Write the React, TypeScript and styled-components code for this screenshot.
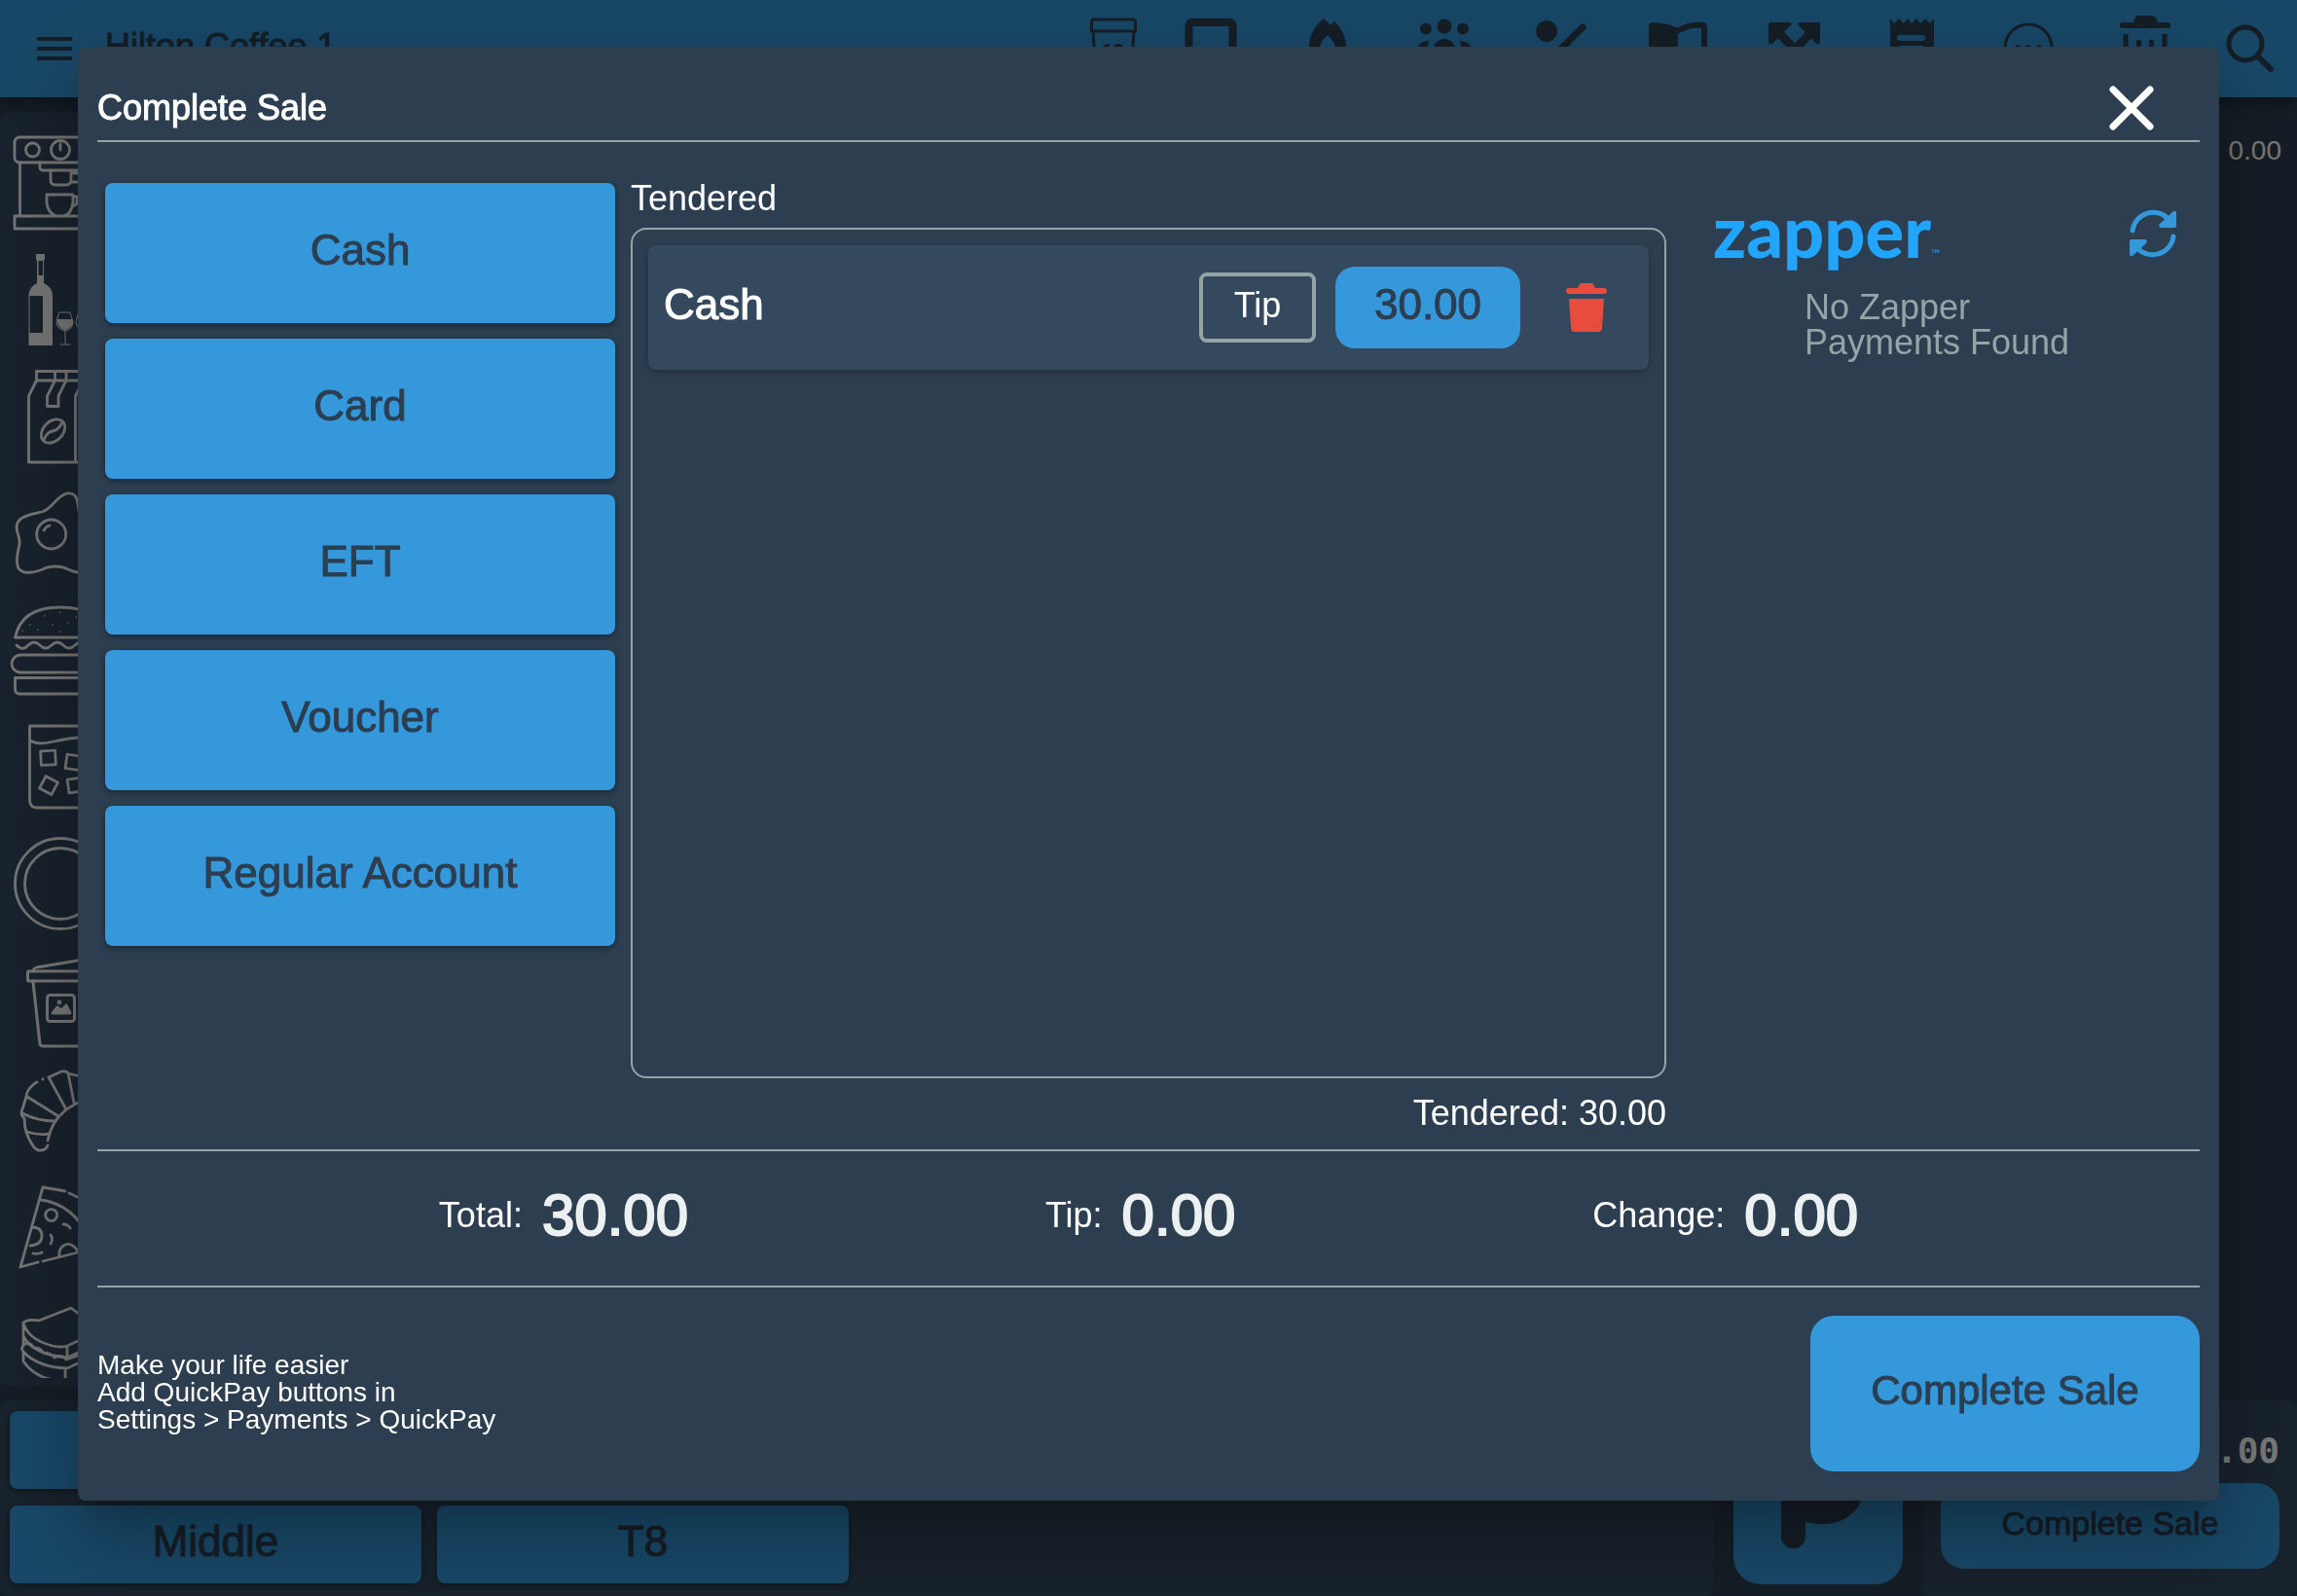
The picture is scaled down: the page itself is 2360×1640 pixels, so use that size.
import React from "react";
import styled, { createGlobalStyle } from "styled-components";

const color = {
  blue: "#3498db",
  navy: "#2c3e50",
  slate: "#34495e",
  grey: "#95a5a6",
  light: "#ecf0f1",
  red: "#e74c3c",
  zapper: "#22a5ff",
};

const GlobalStyle = createGlobalStyle`
  * { box-sizing: border-box; }
  body {
    margin: 0;
    background: ${color.navy};
    font-family: "Liberation Sans", Arial, Helvetica, sans-serif;
    font-size: 36px;
    line-height: 36px;
    color: #fff;
  }
  button { font: inherit; color: inherit; border: 0; padding: 0; background: none; cursor: pointer; }
  h1, h2, h3, p, ul { margin: 0; padding: 0; font: inherit; list-style: none; }
  svg { display: block; overflow: visible; flex: none; }
`;

/* ---------- till screen behind the dialog ---------- */

const Till = styled.div`
  height: 100vh;
  display: flex;
  flex-direction: column;
  overflow: hidden;
`;

const TopBar = styled.header`
  position: relative;
  flex: none;
  height: 100px;
  display: flex;
  align-items: center;
  padding: 0 16px 0 38px;
  background: ${color.blue};
  color: ${color.navy};
  box-shadow: 0 4px 16px rgba(0, 0, 0, 0.45);
`;

const ShopName = styled.h1`
  flex: 1;
  padding: 0 0 4px 34px;
  -webkit-text-stroke: 1px;
`;

const IconButton = styled.button`
  display: block;
`;

const Tools = styled.nav`
  display: flex;
  gap: 56px;
  margin: 0 44px 0 36px;
`;

const Main = styled.main`
  flex: 1;
  min-height: 0;
  display: flex;
  justify-content: space-between;
  padding: 15px 0;
`;

const Categories = styled.ul`
  width: 124px;
  padding: 25px 14px 0;
  background: ${color.slate};
  border-radius: 8px;
  border-bottom: 8px solid ${color.slate};
  overflow: hidden;
  display: flex;
  flex-direction: column;
  gap: 24px;
`;

const OrderPrice = styled.p`
  padding: 22px 16px 0 0;
  font-size: 28px;
`;

const BottomBar = styled.footer`
  flex: none;
  display: grid;
  grid-template-columns: 1fr 216px 384px;
`;

const Panel = styled.div`
  padding: 11px 10px 13px;
  background: ${color.slate};
  border-radius: 8px;
`;

const Tables = styled(Panel)`
  display: grid;
  grid-template-columns: repeat(4, 1fr);
  gap: 16px;
`;

const TileButton = styled.button<{ $tall?: boolean; $wide?: boolean }>`
  height: ${(p) => (p.$tall ? 144 : 80)}px;
  grid-column: ${(p) => (p.$wide ? "1 / -1" : "auto")};
  padding-bottom: 6px;
  border-radius: 8px;
  background: ${color.blue};
  color: ${color.navy};
  font-size: 44px;
  -webkit-text-stroke: 1px;
  box-shadow: 0 2px 6px rgba(0, 0, 0, 0.4);
`;

const ParkCell = styled.div`
  display: flex;
  justify-content: center;
  align-items: flex-end;
  padding-bottom: 12px;
`;

const ParkButton = styled.button`
  border-radius: 28px;
  background: ${color.blue};
  color: ${color.navy};
`;

const Checkout = styled(Panel)`
  display: flex;
  flex-direction: column;
  padding: 34px 18px 28px;
  gap: 15px;
`;

const CheckoutTotal = styled.p`
  text-align: right;
  font-family: "DejaVu Sans Mono", "Liberation Mono", monospace;
  font-weight: bold;
`;

const SaleButton = styled.button<{ $large?: boolean }>`
  width: ${(p) => (p.$large ? "400px" : "100%")};
  height: ${(p) => (p.$large ? 160 : 88)}px;
  padding-bottom: 6px;
  border-radius: 24px;
  background: ${color.blue};
  color: ${color.navy};
  font-size: ${(p) => (p.$large ? 42 : 34)}px;
  -webkit-text-stroke: 1px;
`;

/* ---------- dialog ---------- */

const Backdrop = styled.div`
  position: fixed;
  inset: 0;
  padding: 48px 80px 98px;
  display: flex;
  background: rgba(0, 0, 0, 0.53);
`;

const Dialog = styled.section`
  flex: 1;
  display: flex;
  flex-direction: column;
  padding: 0 20px 30px;
  border-radius: 8px;
  background: ${color.navy};
  box-shadow: 0 22px 30px -14px rgba(0, 0, 0, 0.2), 0 48px 76px 6px rgba(0, 0, 0, 0.14),
    0 18px 92px 16px rgba(0, 0, 0, 0.12);
`;

const DialogHeader = styled.header`
  flex: none;
  height: 98px;
  display: flex;
  align-items: center;
  justify-content: space-between;
  padding: 30px 46px 0 0;
  border-bottom: 2px solid ${color.grey};
`;

const DialogTitle = styled.h2`
  -webkit-text-stroke: 1px;
`;

const Columns = styled.div`
  flex: 1;
  min-height: 0;
  display: grid;
  grid-template-columns: 1fr 2fr 1fr;
`;

const PayMethods = styled.div`
  display: flex;
  flex-direction: column;
  gap: 16px;
  padding: 42px 8px 0;
`;

const TenderedColumn = styled.div`
  display: flex;
  flex-direction: column;
  padding: 40px 8px 19px;
`;

const TenderedList = styled.ul`
  flex: 1;
  margin: 12px 0 18px;
  padding: 16px;
  border: 2px solid ${color.grey};
  border-radius: 16px;
`;

const TenderedTotal = styled.p`
  text-align: right;
`;

const Tender = styled.li`
  height: 128px;
  display: flex;
  align-items: center;
  padding: 0 43px 0 16px;
  border-radius: 8px;
  background: ${color.slate};
  box-shadow: 0 2px 6px rgba(0, 0, 0, 0.25);
`;

const TenderName = styled.span`
  flex: 1;
  padding-bottom: 6px;
  font-size: 44px;
  -webkit-text-stroke: 1px;
`;

const TipButton = styled.button`
  width: 120px;
  height: 72px;
  padding-bottom: 4px;
  border: 4px solid ${color.grey};
  border-radius: 8px;
`;

const AmountButton = styled.button`
  width: 190px;
  height: 84px;
  margin: 0 47px 0 20px;
  padding-bottom: 6px;
  border-radius: 20px;
  background: ${color.blue};
  color: ${color.navy};
  font-size: 44px;
  -webkit-text-stroke: 1px;
`;

const ZapperColumn = styled.div`
  display: flex;
  flex-direction: column;
  align-items: center;
  padding-top: 70px;
`;

const ZapperHead = styled.div`
  align-self: stretch;
  height: 82px;
  display: flex;
  justify-content: space-between;
  align-items: flex-start;
  padding: 0 24px 0 40px;
`;

const ZapperLogo = styled.h3`
  display: flex;
  align-items: baseline;
  font-family: Lato, "Open Sans", sans-serif;
  font-weight: 900;
  font-size: 74px;
  line-height: 42px;
  color: ${color.zapper};
`;

const TradeMark = styled.span`
  font-size: 12px;
  font-weight: 400;
`;

const ZapperNote = styled.p`
  color: ${color.grey};
`;

const Totals = styled.div`
  flex: none;
  height: 142px;
  display: flex;
  justify-content: space-evenly;
  align-items: center;
  gap: 16px;
  padding-bottom: 6px;
  border: solid ${color.grey};
  border-width: 2px 0;
`;

const Total = styled.p`
  display: flex;
  align-items: center;
  gap: 20px;
`;

const TotalValue = styled.strong`
  font-weight: 400;
  font-size: 60px;
  line-height: 60px;
  color: ${color.light};
  -webkit-text-stroke: 2px;
`;

const DialogFooter = styled.footer`
  flex: none;
  display: flex;
  justify-content: space-between;
  align-items: center;
  padding-top: 29px;
`;

const Hint = styled.p`
  padding-bottom: 2px;
  font-size: 28px;
  line-height: 28px;
`;

/* ---------- icons ---------- */

const Tool = ({ children }: { children: React.ReactNode }) => (
  <svg width="64" height="72" viewBox="0 0 64 72" fill="currentColor">
    {children}
  </svg>
);

const line = (w: number) => ({
  fill: "none",
  stroke: "currentColor",
  strokeWidth: w,
  strokeLinecap: "round" as const,
  strokeLinejoin: "round" as const,
});

const tools: { name: string; art: React.ReactNode }[] = [
  { name: "Tablet", art: <rect x="9.500" y="9" width="45" height="54" rx="3" {...line(8)} /> },
  {
    name: "Popular",
    art: (
      <path
        fillRule="evenodd"
        d="M28 5C20 11 13 22 13 34c0 16 8 24 19 24s19-8 19-24c0-11-6-21-12-26q-2 1-4 4-3-4-7-7zM32 22c5 4 8 9 8 15 0 7-3 11-8 11s-8-4-8-11c0-6 3-11 8-15z"
      />
    ),
  },
  {
    name: "Customers",
    art: (
      <>
        <circle cx="32" cy="13" r="7.500" />
        <circle cx="13" cy="15.500" r="6" />
        <circle cx="51" cy="15.500" r="6" />
        <path d="M32 26c7 0 11 5 11 11v13H21V37c0-6 4-11 11-11zM16 28c-7 0-12 4-12 9v9h11V36q0-4 1-8zM48 28c7 0 12 4 12 9v9H49V36q0-4-1-8z" />
      </>
    ),
  },
  {
    name: "Discount",
    art: (
      <>
        <circle cx="17" cy="18" r="11" />
        <circle cx="47" cy="50" r="11" />
        <path d="M54 14L10 58" {...line(7)} />
      </>
    ),
  },
  {
    name: "Menu book",
    art: (
      <>
        <path d="M2 13q0-4 4-4 14 0 26 6v44Q20 53 2 53z" />
        <path d="M32 17.500Q43 11 56 11.500q3 0 3 3V51q-14 0-27 7" {...line(6)} />
      </>
    ),
  },
  {
    name: "Transfer",
    art: (
      <>
        <path d="M7 9h20q3 1 1 3L9 31q-4 1-4-3V11q0-2 2-2zM57 9H38q-4 1-2 3l18 19q4 1 4-3V11q0-2-1-2z" />
        <path d="M16 20l16 17v22M48 20L32 37" {...line(9)} />
      </>
    ),
  },
  {
    name: "Receipt",
    art: (
      <path
        fillRule="evenodd"
        d="M10 5l4 5 5-5 5 5 4-5 4 5 5-5 4 5 5-5 5 5 4-5v54H10zM20 22a2 2 0 000 6h23a2 2 0 000-6zM20 33v5h24v-5z"
      />
    ),
  },
  {
    name: "More",
    art: (
      <>
        <circle cx="32" cy="35" r="24" {...line(3)} />
        <circle cx="21" cy="35" r="3" />
        <circle cx="32" cy="35" r="3" />
        <circle cx="43" cy="35" r="3" />
      </>
    ),
  },
  {
    name: "Clear",
    art: (
      <>
        <path d="M24 2h16q4 1 5 8H20q1-7 4-8z" />
        <rect x="6" y="9" width="52" height="6" rx="2" />
        <path d="M12 21v39h40V21" {...line(5)} strokeLinecap="butt" />
        <path d="M25.500 29v21M38.500 29v21" {...line(5)} />
      </>
    ),
  },
];

const Category = ({ children }: { children: React.ReactNode }) => (
  <li>
    <svg width="96" height="96" viewBox="0 0 96 96" fill="none" stroke="#f7f7f7" strokeWidth="2.800" strokeLinejoin="round" strokeLinecap="round">
      {children}
    </svg>
  </li>
);

const categories: React.ReactNode[] = [
  // espresso machine
  <>
    <rect x="1" y="1" width="94" height="26" rx="5" />
    <circle cx="19.500" cy="14" r="7" />
    <circle cx="48" cy="14" r="9.500" />
    <path d="M48 8v6M6.500 27v54M89.500 27v54M27 27v5q0 3 3 3h40M38 35v10q0 5 5 5h11q5 0 5-5V35M60 38h20M60 47h20" />
    <path d="M34 60h27v8q-2 13-10 14h-7q-9-3-10-14zM61 62h4v6q0 3-5 4M1 82h94v13H1z" />
  </>,
  // wine bottle and glasses
  <>
    <path
      d="M23 1h9v6h-1v24q9 4 9 13v51H15.500V44q0-9 8.500-13V7h-1zM25.500 8v15h4.500V8zM16.500 44v38H30V44z"
      fill="#f7f7f7"
      fillRule="evenodd"
      stroke="none"
    />
    <path d="M47 61h11l3 10q0 7-8 9-9-2-9-9zM53 80v13M48 94h10M67 61h11l3 10q0 7-8 9-9-2-9-9zM73 80v13M68 94h10" strokeWidth="1" />
    <path d="M45 68h16q1 9-8 11-9-2-8-11z" fill="#f7f7f7" stroke="none" />
  </>,
  // bag of coffee
  <>
    <path d="M23.500 1.500H72v9.500H23.500zM23.500 11l-8 16v68H80V27l-8-16M42.500 1.500V11l-8 16v10.500H46V27l8-16V1.500M63.500 95V27l8-16" />
    <ellipse cx="40.500" cy="63" rx="14" ry="10" transform="rotate(-45 40.500 63)" />
    <path d="M31 72q3-8 9-9t10-9" />
  </>,
  // fried egg
  <>
    <circle cx="38.700" cy="49" r="15" />
    <path d="M31 45q2-4 6-5" />
    <path d="M29 26C16 29 3 31 3 42c0 6 4 10 3 17S1 76 5 84c5 7 17 4 25 1 7-4 18-4 26 0 10 5 25 6 30-4 5-9-4-16-5-26-1-9 2-16-6-22-8-5-8-6-9-15C65 9 61 6 55 7c-11 2-15 16-26 19z" />
  </>,
  // burger
  <>
    <path d="M1.500 35Q8 4 48 4t46.500 31z" />
    <path d="M3 43c5 5 8 4 12 0s8-4 12 0 8 4 12 0 8-4 12 0 8 4 12 0 8-4 12 0 8 4 12 0" />
    <rect x="-2" y="53" width="100" height="18" rx="9" />
    <path d="M1.500 76.500h93V88q0 5-5 5h-83q-5 0-5-5z" />
    <path d="M9 28h.1M17 22h.1M25 27h.1M32 13h.1M40 22h.1M48 9h.1M48 29h.1M56 20h.1M64 14h.1" strokeWidth="1.500" />
  </>,
  // iced drink
  <>
    <path d="M16.500 6h63v76q0 8-8 8h-47q-8 0-8-8zM17 21q8 5 24 1t38-5" />
    <rect x="28" y="31.500" width="15" height="14.500" transform="rotate(-3 35.500 39)" />
    <rect x="54" y="36" width="15" height="14.500" transform="rotate(8 61 43)" />
    <rect x="29" y="60" width="14" height="14" transform="rotate(28 36 67)" />
    <rect x="56" y="60" width="14" height="14" transform="rotate(-8 63 67)" />
  </>,
  // plate
  <>
    <circle cx="48" cy="48" r="46.500" />
    <circle cx="48" cy="48" r="36.500" />
  </>,
  // takeaway cup
  <>
    <path d="M20 18q0-3 4-4l42-7h10l2 11" />
    <rect x="14.500" y="18" width="68" height="10" rx="1" strokeWidth="3" />
    <path d="M20 29l7 64q1 2 3 2h38q2 0 2-2l7-64" strokeWidth="3" />
    <rect x="34.500" y="42.500" width="28" height="27" rx="3" strokeWidth="3" />
    <path d="M40 61l5-6 4 3 5-5 4 8z" fill="#f7f7f7" />
    <circle cx="47" cy="50" r="1" />
  </>,
  // croissant
  <>
    <path d="M36 7l13-6q5-1 7 2l24 6M30 9h.1M24 12l-2 1Q13 20 13 27L8 43q0 4 3 6 0 15 8 27 4 7 9 6 5 0 7-5M35 72l2-7q3-10 9-17l8-8 12-7" />
    <path d="M36 7l18 33M56 3l6 30M14 27l32 20M9 44q15 8 34 8M14 63q12 4 23 2" />
  </>,
  // pizza slice
  <>
    <path d="M30 0l23 4M57 6q20 8 30 24M28 13q38 5 54 50M30 0L7 82l18-5M30 76l52-13" />
    <circle cx="38.700" cy="28.600" r="6" />
    <path d="M19 41q10 0 10 9t-12 10M47 71q-1-9 6-12t14 8M51 38q5 0 7 4M38 49q3 4 0 9M20 68q5 1 9-1" />
  </>,
  // sandwich
  <>
    <path d="M10 19q5-4 16-2l33-13 34 26-27 8M10 19q4 17 30 24 9 2 15 0l11-5M10 19v14q10 19 45 22V44M10 33v10q-3 2 0 6v10q15 21 43 19V66M12 41q5-2 9 4 7 0 9 5 8 0 12 5 8-4 12 2l12-4M10 49q15 16 45 17l11-5M55 55l11-5" />
  </>,
];

const payMethods = ["Cash", "Card", "EFT", "Voucher", "Regular Account"];

const totals = [
  { label: "Total:", value: "30.00" },
  { label: "Tip:", value: "0.00" },
  { label: "Change:", value: "0.00" },
];

export default function App() {
  return (
    <>
      <GlobalStyle />
      <Till>
        <TopBar>
          <IconButton aria-label="Menu">
            <svg width="36" height="24" viewBox="0 0 36 24" fill="currentColor">
              <path d="M0 0h36v4H0zM0 10h36v4H0zM0 20h36v4H0z" />
            </svg>
          </IconButton>
          <ShopName>Hilton Coffee 1</ShopName>
          <IconButton aria-label="Takeaway">
            <Tool>
              <path d="M9.500 18V9q0-3 3-3h39q3 0 3 3v9zM11 18l3 42h36l3-42" {...line(3)} />
              <path d="M20 36q1-5 8-5v12q-6 0-8-7zM31 35q2-4 6-4t7 5q0 7-7 7t-6-8z" />
            </Tool>
          </IconButton>
          <Tools>
            {tools.map((t) => (
              <IconButton key={t.name} aria-label={t.name}>
                <Tool>{t.art}</Tool>
              </IconButton>
            ))}
          </Tools>
          <IconButton aria-label="Search">
            <Tool>
              <circle cx="27" cy="31" r="17" {...line(5)} />
              <path d="M40 44l13 13" {...line(6)} />
            </Tool>
          </IconButton>
        </TopBar>
        <Main>
          <Categories>
            {categories.map((art, i) => (
              <Category key={i}>{art}</Category>
            ))}
          </Categories>
          <OrderPrice>0.00</OrderPrice>
        </Main>
        <BottomBar>
          <Tables>
            <TileButton $wide aria-label="Tables" />
            <TileButton>Middle</TileButton>
            <TileButton>T8</TileButton>
          </Tables>
          <ParkCell>
            <ParkButton aria-label="Park sale">
              <svg width="174" height="174" viewBox="0 0 174 174">
                <rect x="49" y="36" width="25" height="101" rx="12" fill="currentColor" />
                <rect x="61" y="46" width="60" height="53" rx="26" fill="none" stroke="currentColor" strokeWidth="26" />
              </svg>
            </ParkButton>
          </ParkCell>
          <Checkout>
            <CheckoutTotal>30.00</CheckoutTotal>
            <SaleButton>Complete Sale</SaleButton>
          </Checkout>
        </BottomBar>
      </Till>

      <Backdrop>
        <Dialog role="dialog" aria-modal="true" aria-labelledby="dialog-title">
          <DialogHeader>
            <DialogTitle id="dialog-title">Complete Sale</DialogTitle>
            <IconButton aria-label="Close">
              <svg width="48" height="48" viewBox="0 0 48 48">
                <path d="M5 5l38 38M43 5L5 43" {...line(7)} />
              </svg>
            </IconButton>
          </DialogHeader>

          <Columns>
            <PayMethods>
              {payMethods.map((m) => (
                <TileButton $tall key={m}>
                  {m}
                </TileButton>
              ))}
            </PayMethods>

            <TenderedColumn>
              <h3>Tendered</h3>
              <TenderedList>
                <Tender>
                  <TenderName>Cash</TenderName>
                  <TipButton>Tip</TipButton>
                  <AmountButton>30.00</AmountButton>
                  <IconButton aria-label="Remove payment">
                    <svg width="42" height="50" viewBox="0 0 42 50" fill={color.red}>
                      <path d="M3 5h9l2-4q0-1 2-1h10q2 0 2 1l2 4h9q3 0 3 3t-3 3H3q-3 0-3-3t3-3zM3 16h36l-2 30q0 4-4 4H9q-4 0-4-4z" />
                    </svg>
                  </IconButton>
                </Tender>
              </TenderedList>
              <TenderedTotal>Tendered: 30.00</TenderedTotal>
            </TenderedColumn>

            <ZapperColumn>
              <ZapperHead>
                <ZapperLogo>
                  zapper<TradeMark>™</TradeMark>
                </ZapperLogo>
                <IconButton aria-label="Refresh">
                  <svg width="48" height="48" viewBox="0 0 48 48" fill={color.blue} color={color.blue}>
                    <path d="M3 21A21.500 21.500 0 0140 9M45 27A21.500 21.500 0 018 39" {...line(5)} />
                    <path d="M45 1q3-1 3 2v13q0 2-2 2H32q-3-1-1-4zM3 47q-3 1-3-2V32q0-2 2-2h14q3 1 1 4z" />
                  </svg>
                </IconButton>
              </ZapperHead>
              <ZapperNote>
                No Zapper
                <br />
                Payments Found
              </ZapperNote>
            </ZapperColumn>
          </Columns>

          <Totals>
            {totals.map((t) => (
              <Total key={t.label}>
                {t.label}
                <TotalValue>{t.value}</TotalValue>
              </Total>
            ))}
          </Totals>

          <DialogFooter>
            <Hint>
              Make your life easier
              <br />
              Add QuickPay buttons in
              <br />
              Settings &gt; Payments &gt; QuickPay
            </Hint>
            <SaleButton $large>Complete Sale</SaleButton>
          </DialogFooter>
        </Dialog>
      </Backdrop>
    </>
  );
}
